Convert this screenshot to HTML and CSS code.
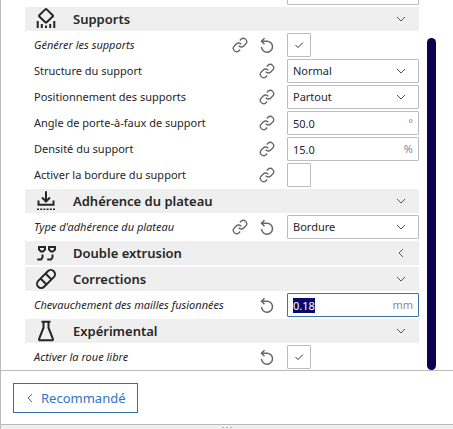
FILE: index.html
```html
<!DOCTYPE html>
<html lang="fr">
<head>
  <meta charset="UTF-8" />
  <title>Paramètres d'impression</title>
  <meta name="viewport" content="width=device-width, initial-scale=1.0" />
  <link rel="stylesheet" href="styles.css">
</head>
<body>
  <!-- icons -->
  <svg class="sprite" aria-hidden="true">
    <symbol id="link" viewBox="0 0 24 24">
      <path d="M10 13a5 5 0 0 0 7.54.54l3-3a5 5 0 0 0-7.07-7.07l-1.72 1.71" />
      <path d="M14 11a5 5 0 0 0-7.54-.54l-3 3a5 5 0 0 0 7.07 7.07l1.71-1.71" />
    </symbol>
    <symbol id="undo" viewBox="0 0 16 16">
      <path d="M5.500 1.200L2.500 4.200l3 3M2.500 4.200H8a5.500 5.500 0 1 1-5.500 5.800" />
    </symbol>
    <symbol id="down" viewBox="0 0 10 10"><path d="M1 3l4 4 4-4" /></symbol>
    <symbol id="left" viewBox="0 0 10 10"><path d="M7 1L3 5l4 4" /></symbol>
    <symbol id="check" viewBox="0 0 10 10"><path d="M1.500 5l2.500 2.500 5-5" /></symbol>
    <symbol id="supports" viewBox="0 0 24 24">
      <path d="M11.300 2.400L5.300 8.200q-.7.700 0 1.400l6 5.600q.7.600 1.400 0l6-5.600q.7-.7 0-1.400l-6-5.800q-.7-.6-1.400 0z" />
      <path d="M3.700 14v7M7.800 17v4M12 18.500V21M16.200 17v4M20.300 14v7" />
    </symbol>
    <symbol id="adhesion" viewBox="0 0 24 24">
      <path d="M12 2.300v10M8 8.500l4 4 4-4M4.500 11.500v4.300h15v-4.300" />
      <path d="M3 20.200h18" stroke-width="1.500" stroke-dasharray="2 1.200" />
    </symbol>
    <symbol id="dual" viewBox="0 0 24 24">
      <path d="M4 6h8M5 6v2.500l2 1.900h2l2-1.900V6M8.500 13.500v3l-1.500 2H3.200" />
      <path d="M14 6h8M15 6v2.500l2 1.900h2l2-1.900V6M18.500 13.500v3l-1.500 2h-3.800" />
    </symbol>
    <symbol id="fixes" viewBox="0 0 24 24">
      <g transform="rotate(-45 12 12)">
        <rect x="1" y="7.800" width="22" height="8.400" rx="4.200" />
        <path d="M8.500 7.800v8.400M15.500 7.800v8.400" />
      </g>
    </symbol>
    <symbol id="flask" viewBox="0 0 24 24">
      <path d="M7.500 2.700h9M9.500 2.700v6L5.200 19.600q-.6 1.700 1 1.700h11.600q1.600 0 1-1.700L14.500 8.700v-6" />
    </symbol>
  </svg>

  <main class="settings">
    <div class="list">
      <div class="row">
        <span class="label"></span>
        <div class="field"><input type="text" aria-label="Valeur" /></div>
      </div>

      <button class="category">
        <svg class="category-icon"><use href="#supports" /></svg>
        <span>Supports</span>
        <svg class="arrow"><use href="#down" /></svg>
      </button>
      <div class="row">
        <label class="label changed" for="generate">Générer les supports</label>
        <svg class="icon"><use href="#link" /></svg>
        <svg class="icon undo"><use href="#undo" /></svg>
        <div class="field">
          <span class="tick"><input type="checkbox" id="generate" checked /><svg><use href="#check" /></svg></span>
        </div>
      </div>
      <div class="row">
        <label class="label" for="structure">Structure du support</label>
        <svg class="icon"><use href="#link" /></svg>
        <div class="field">
          <select id="structure"><option>Normal</option><option>Arborescence</option></select>
          <svg class="arrow"><use href="#down" /></svg>
        </div>
      </div>
      <div class="row">
        <label class="label" for="placement">Positionnement des supports</label>
        <svg class="icon"><use href="#link" /></svg>
        <div class="field">
          <select id="placement"><option>Partout</option></select>
          <svg class="arrow"><use href="#down" /></svg>
        </div>
      </div>
      <div class="row">
        <label class="label" for="angle">Angle de porte-à-faux de support</label>
        <svg class="icon"><use href="#link" /></svg>
        <div class="field"><input type="text" id="angle" value="50.0" /><span class="unit">°</span></div>
      </div>
      <div class="row">
        <label class="label" for="density">Densité du support</label>
        <svg class="icon"><use href="#link" /></svg>
        <div class="field"><input type="text" id="density" value="15.0" /><span class="unit">%</span></div>
      </div>
      <div class="row">
        <label class="label" for="brim">Activer la bordure du support</label>
        <svg class="icon"><use href="#link" /></svg>
        <div class="field">
          <span class="tick"><input type="checkbox" id="brim" /><svg><use href="#check" /></svg></span>
        </div>
      </div>

      <button class="category">
        <svg class="category-icon"><use href="#adhesion" /></svg>
        <span>Adhérence du plateau</span>
        <svg class="arrow"><use href="#down" /></svg>
      </button>
      <div class="row">
        <label class="label changed" for="adhesion-type">Type d'adhérence du plateau</label>
        <svg class="icon"><use href="#link" /></svg>
        <svg class="icon undo"><use href="#undo" /></svg>
        <div class="field">
          <select id="adhesion-type"><option>Bordure</option></select>
          <svg class="arrow"><use href="#down" /></svg>
        </div>
      </div>

      <button class="category">
        <svg class="category-icon"><use href="#dual" /></svg>
        <span>Double extrusion</span>
        <svg class="arrow"><use href="#left" /></svg>
      </button>

      <button class="category">
        <svg class="category-icon"><use href="#fixes" /></svg>
        <span>Corrections</span>
        <svg class="arrow"><use href="#down" /></svg>
      </button>
      <div class="row">
        <label class="label changed" for="overlap">Chevauchement des mailles fusionnées</label>
        <svg class="icon undo"><use href="#undo" /></svg>
        <div class="field"><input type="text" id="overlap" value="0.18" /><span class="unit">mm</span></div>
      </div>

      <button class="category">
        <svg class="category-icon"><use href="#flask" /></svg>
        <span>Expérimental</span>
        <svg class="arrow"><use href="#down" /></svg>
      </button>
      <div class="row">
        <label class="label changed" for="coasting">Activer la roue libre</label>
        <svg class="icon undo"><use href="#undo" /></svg>
        <div class="field">
          <span class="tick"><input type="checkbox" id="coasting" checked /><svg><use href="#check" /></svg></span>
        </div>
      </div>
    </div>
    <div class="track"><div class="thumb"></div></div>
  </main>

  <footer class="footer">
    <button class="mode"><svg><use href="#left" /></svg>Recommandé</button>
  </footer>
  <div class="handle"><i></i><i></i><i></i></div>

  <script>
    const overlap = document.getElementById("overlap");
    overlap.focus();
    overlap.select();
  </script>
</body>
</html>
```

FILE: styles.css
```css
* {
  box-sizing: border-box;
}
body {
  margin: 0;
  height: 100vh;
  display: flex;
  flex-direction: column;
  border-left: 1px solid #b9b9b9;
  background: #fff;
  color: #262626;
  font: 11px/16px "Noto Sans", sans-serif;
}
button, input, select {
  font: inherit;
  color: inherit;
  margin: 0;
}
svg {
  fill: none;
  stroke: currentColor;
  flex: none;
}
.sprite {
  position: absolute;
  width: 0;
  height: 0;
}

/* settings list */
.settings {
  flex: 1;
  min-height: 0;
  display: flex;
  gap: 8px;
  padding: 0 17px 0 24px;
  overflow: hidden;
}
.list {
  flex: 1;
  display: flex;
  flex-direction: column;
  justify-content: flex-end;
  gap: 2px;
  padding-bottom: 1px;
}
.category, .row {
  flex: none;
  height: 24px;
  display: flex;
  align-items: center;
}
.category {
  border: 0;
  padding: 0 13px 0 9px;
  gap: 15px;
  background: #efefef;
  font-size: 13px;
  font-weight: 600;
  text-align: left;
}
.category span {
  flex: 1;
}
.category-icon {
  width: 24px;
  height: 24px;
  stroke-width: 2;
}
.arrow {
  width: 10px;
  height: 10px;
  color: #555;
}
.row {
  gap: 11px;
  padding-left: 9px;
}
.label {
  flex: 1;
  white-space: nowrap;
}
.changed {
  font-style: italic;
}
.icon {
  width: 16px;
  height: 16px;
  color: #666;
  stroke-width: 2;
}
.undo {
  stroke-width: 1.5;
}
.field {
  position: relative;
  width: 132px;
  height: 24px;
  margin-left: 1px;
}
.field input, .field select {
  appearance: none;
  display: block;
  width: 100%;
  height: 24px;
  padding: 0 5px;
  border: 1px solid #bcbcc2;
  border-radius: 1px;
  background: #fff;
  outline: none;
}
.field input:focus {
  border-color: #3d74ad;
}
.field input::selection {
  background: #0a0a6e;
  color: #fff;
}
.field .arrow {
  position: absolute;
  top: 7px;
  right: 13px;
  pointer-events: none;
}
.unit {
  position: absolute;
  top: 4px;
  right: 6px;
  color: #8a8a8a;
}
.tick {
  position: relative;
  display: block;
  width: 24px;
  height: 24px;
}
.tick svg {
  position: absolute;
  top: 7px;
  left: 7px;
  width: 10px;
  height: 10px;
  color: #333;
  pointer-events: none;
}
.tick input:not(:checked) + svg {
  display: none;
}
.track {
  width: 9px;
  padding-top: 38px;
}
.thumb {
  height: 100%;
  border-radius: 5px;
  background: #08024f;
}

/* footer */
.footer {
  padding: 12px 12px 11px;
  border-top: 1px solid #b9b9b9;
}
.mode {
  display: flex;
  align-items: center;
  gap: 6px;
  height: 30px;
  padding: 0 11px;
  border: 1px solid #3470a8;
  background: #fff;
  color: #2f74c0;
  font-size: 13px;
}
.mode svg {
  width: 10px;
  height: 10px;
}
.handle {
  height: 5px;
  display: flex;
  justify-content: center;
  align-items: center;
  gap: 2px;
  border-top: 1px solid #b9b9b9;
  background: #efefef;
}
.handle i {
  width: 2px;
  height: 1px;
  background: #b0b0b0;
}
```
